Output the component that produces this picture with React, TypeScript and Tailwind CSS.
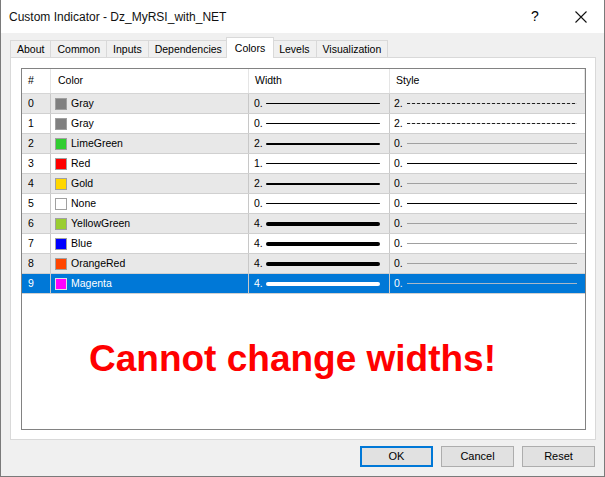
import React from "react";

const rows = [
  { n: 0, name: "Gray", color: "#808080", w: "0.", lw: 1, s: "2.", dash: true, sc: "#202020" },
  { n: 1, name: "Gray", color: "#808080", w: "0.", lw: 1, s: "2.", dash: true, sc: "#202020" },
  { n: 2, name: "LimeGreen", color: "#32cd32", w: "2.", lw: 2, s: "0.", dash: false, sc: "#a0a0a0" },
  { n: 3, name: "Red", color: "#ff0000", w: "1.", lw: 1, s: "0.", dash: false, sc: "#000000" },
  { n: 4, name: "Gold", color: "#ffd700", w: "2.", lw: 2, s: "0.", dash: false, sc: "#a0a0a0" },
  { n: 5, name: "None", color: "#ffffff", w: "0.", lw: 1, s: "0.", dash: false, sc: "#000000" },
  { n: 6, name: "YellowGreen", color: "#9acd32", w: "4.", lw: 4, s: "0.", dash: false, sc: "#a0a0a0" },
  { n: 7, name: "Blue", color: "#0000ff", w: "4.", lw: 4, s: "0.", dash: false, sc: "#a0a0a0" },
  { n: 8, name: "OrangeRed", color: "#ff4500", w: "4.", lw: 4, s: "0.", dash: false, sc: "#a0a0a0" },
  { n: 9, name: "Magenta", color: "#ff00ff", w: "4.", lw: 4, s: "0.", dash: false, sc: "#a8b8c8" },
];

const tabs = ["About", "Common", "Inputs", "Dependencies", "Colors", "Levels", "Visualization"];

export default function App() {
  return (
    <div
      className="w-[605px] h-[477px] flex flex-col bg-[#f0f0f0] border-x border-b border-[#7a7a7a] overflow-hidden text-black"
      style={{ fontFamily: '"Liberation Sans", Arial, sans-serif' }}
    >
      {/* Title bar */}
      <div className="h-[33px] shrink-0 bg-white flex items-center pl-[8px] text-[12px]">
        <div className="flex-1 text-[#111]">Custom Indicator - Dz_MyRSI_with_NET</div>
        <div className="w-[20px] text-center text-[14px] mr-[30px]">?</div>
        <svg width="12" height="12" viewBox="0 0 12 12" className="mr-[17px]">
          <path d="M0.5 0.5 L11.5 11.5 M11.5 0.5 L0.5 11.5" stroke="#111" strokeWidth="1.1" fill="none" />
        </svg>
      </div>

      {/* Tabs */}
      <div className="h-[24px] shrink-0 flex items-end pl-[9px] text-[10.5px] relative z-10">
        {tabs.map((t) => {
          const sel = t === "Colors";
          return sel ? (
            <div
              key={t}
              className="h-[21px] px-[8px] -mb-px flex items-start pt-[3px] bg-white border-x border-t border-[#d9d9d9] -mx-[2px] relative z-10"
            >
              {t}
            </div>
          ) : (
            <div
              key={t}
              className="h-[17px] px-[6px] pt-[1px] flex items-center bg-[#f0f0f0] border-l border-t border-[#d9d9d9] last:border-r"
            >
              {t}
            </div>
          );
        })}
      </div>

      {/* Panel */}
      <div className="h-[383px] shrink-0 ml-[9px] mr-[8px] bg-white border border-[#d9d9d9] pl-[10px] pt-[10px] pr-[9px] pb-[9px] flex">
        <div className="flex-1 border border-[#828282] bg-white flex flex-col text-[10.5px]">
          {/* header */}
          <div className="h-[25px] shrink-0 grid grid-cols-[29px_198px_141px_1fr] border-b border-[#d5d5d5]">
            <div className="border-r border-[#e5e5e5] flex items-center pl-[6px]">#</div>
            <div className="border-r border-[#e5e5e5] flex items-center pl-[7px]">Color</div>
            <div className="border-r border-[#e5e5e5] flex items-center pl-[6px]">Width</div>
            <div className="border-r border-[#e5e5e5] flex items-center pl-[6px]">Style</div>
          </div>
          {rows.map((r) => {
            const sel = r.n === 9;
            const bg = sel ? "bg-[#0078d7] text-white" : r.n % 2 === 0 ? "bg-[#e8e8e8]" : "bg-white";
            return (
              <div
                key={r.n}
                className={`h-[20px] shrink-0 grid grid-cols-[29px_198px_141px_1fr] border-b border-[#d0d0d0] ${bg}`}
              >
                <div className="border-r border-[#c8c8c8] flex items-center pl-[6px]">{r.n}</div>
                <div className="border-r border-[#c8c8c8] flex items-center pl-[4px]">
                  <div
                    className={`w-[12px] h-[12px] border ${sel ? "border-[#e0e0e0]" : "border-[#a0a0a0]"} mr-[4px]`}
                    style={{ backgroundColor: r.color }}
                  />
                  <span>{r.name}</span>
                </div>
                <div className="border-r border-[#c8c8c8] flex items-center pl-[5px] pr-[9px]">
                  <span className="w-[12px]">{r.w}</span>
                  <div
                    className="flex-1 rounded-full"
                    style={{ height: r.lw, backgroundColor: sel ? "#ffffff" : "#000000" }}
                  />
                </div>
                <div className="flex items-center pl-[4px] pr-[8px]">
                  <span className="w-[13px]">{r.s}</span>
                  {r.dash ? (
                    <div className="flex-1 h-px bg-[repeating-linear-gradient(to_right,#202020_0_3px,#d0d0d0_3px_5px)]" />
                  ) : (
                    <div className="flex-1 h-px" style={{ backgroundColor: r.sc }} />
                  )}
                </div>
              </div>
            );
          })}
          <div className="flex-1 pl-[67px] pt-[46px]">
            <div
              className="text-[37px] leading-none font-bold text-[#ff0000]"
              style={{ fontFamily: '"Liberation Sans", Arial, sans-serif' }}
            >
              Cannot change widths!
            </div>
          </div>
        </div>
      </div>

      {/* Buttons */}
      <div className="flex justify-end gap-[8px] pr-[9px] pt-[6px] text-[11px]">
        <button className="w-[73px] h-[21px] bg-[#e1e1e1] border-2 border-[#0078d7] flex items-center justify-center">
          OK
        </button>
        <button className="w-[73px] h-[21px] bg-[#e1e1e1] border border-[#adadad] flex items-center justify-center">
          Cancel
        </button>
        <button className="w-[73px] h-[21px] bg-[#e1e1e1] border border-[#adadad] flex items-center justify-center">
          Reset
        </button>
      </div>
    </div>
  );
}
